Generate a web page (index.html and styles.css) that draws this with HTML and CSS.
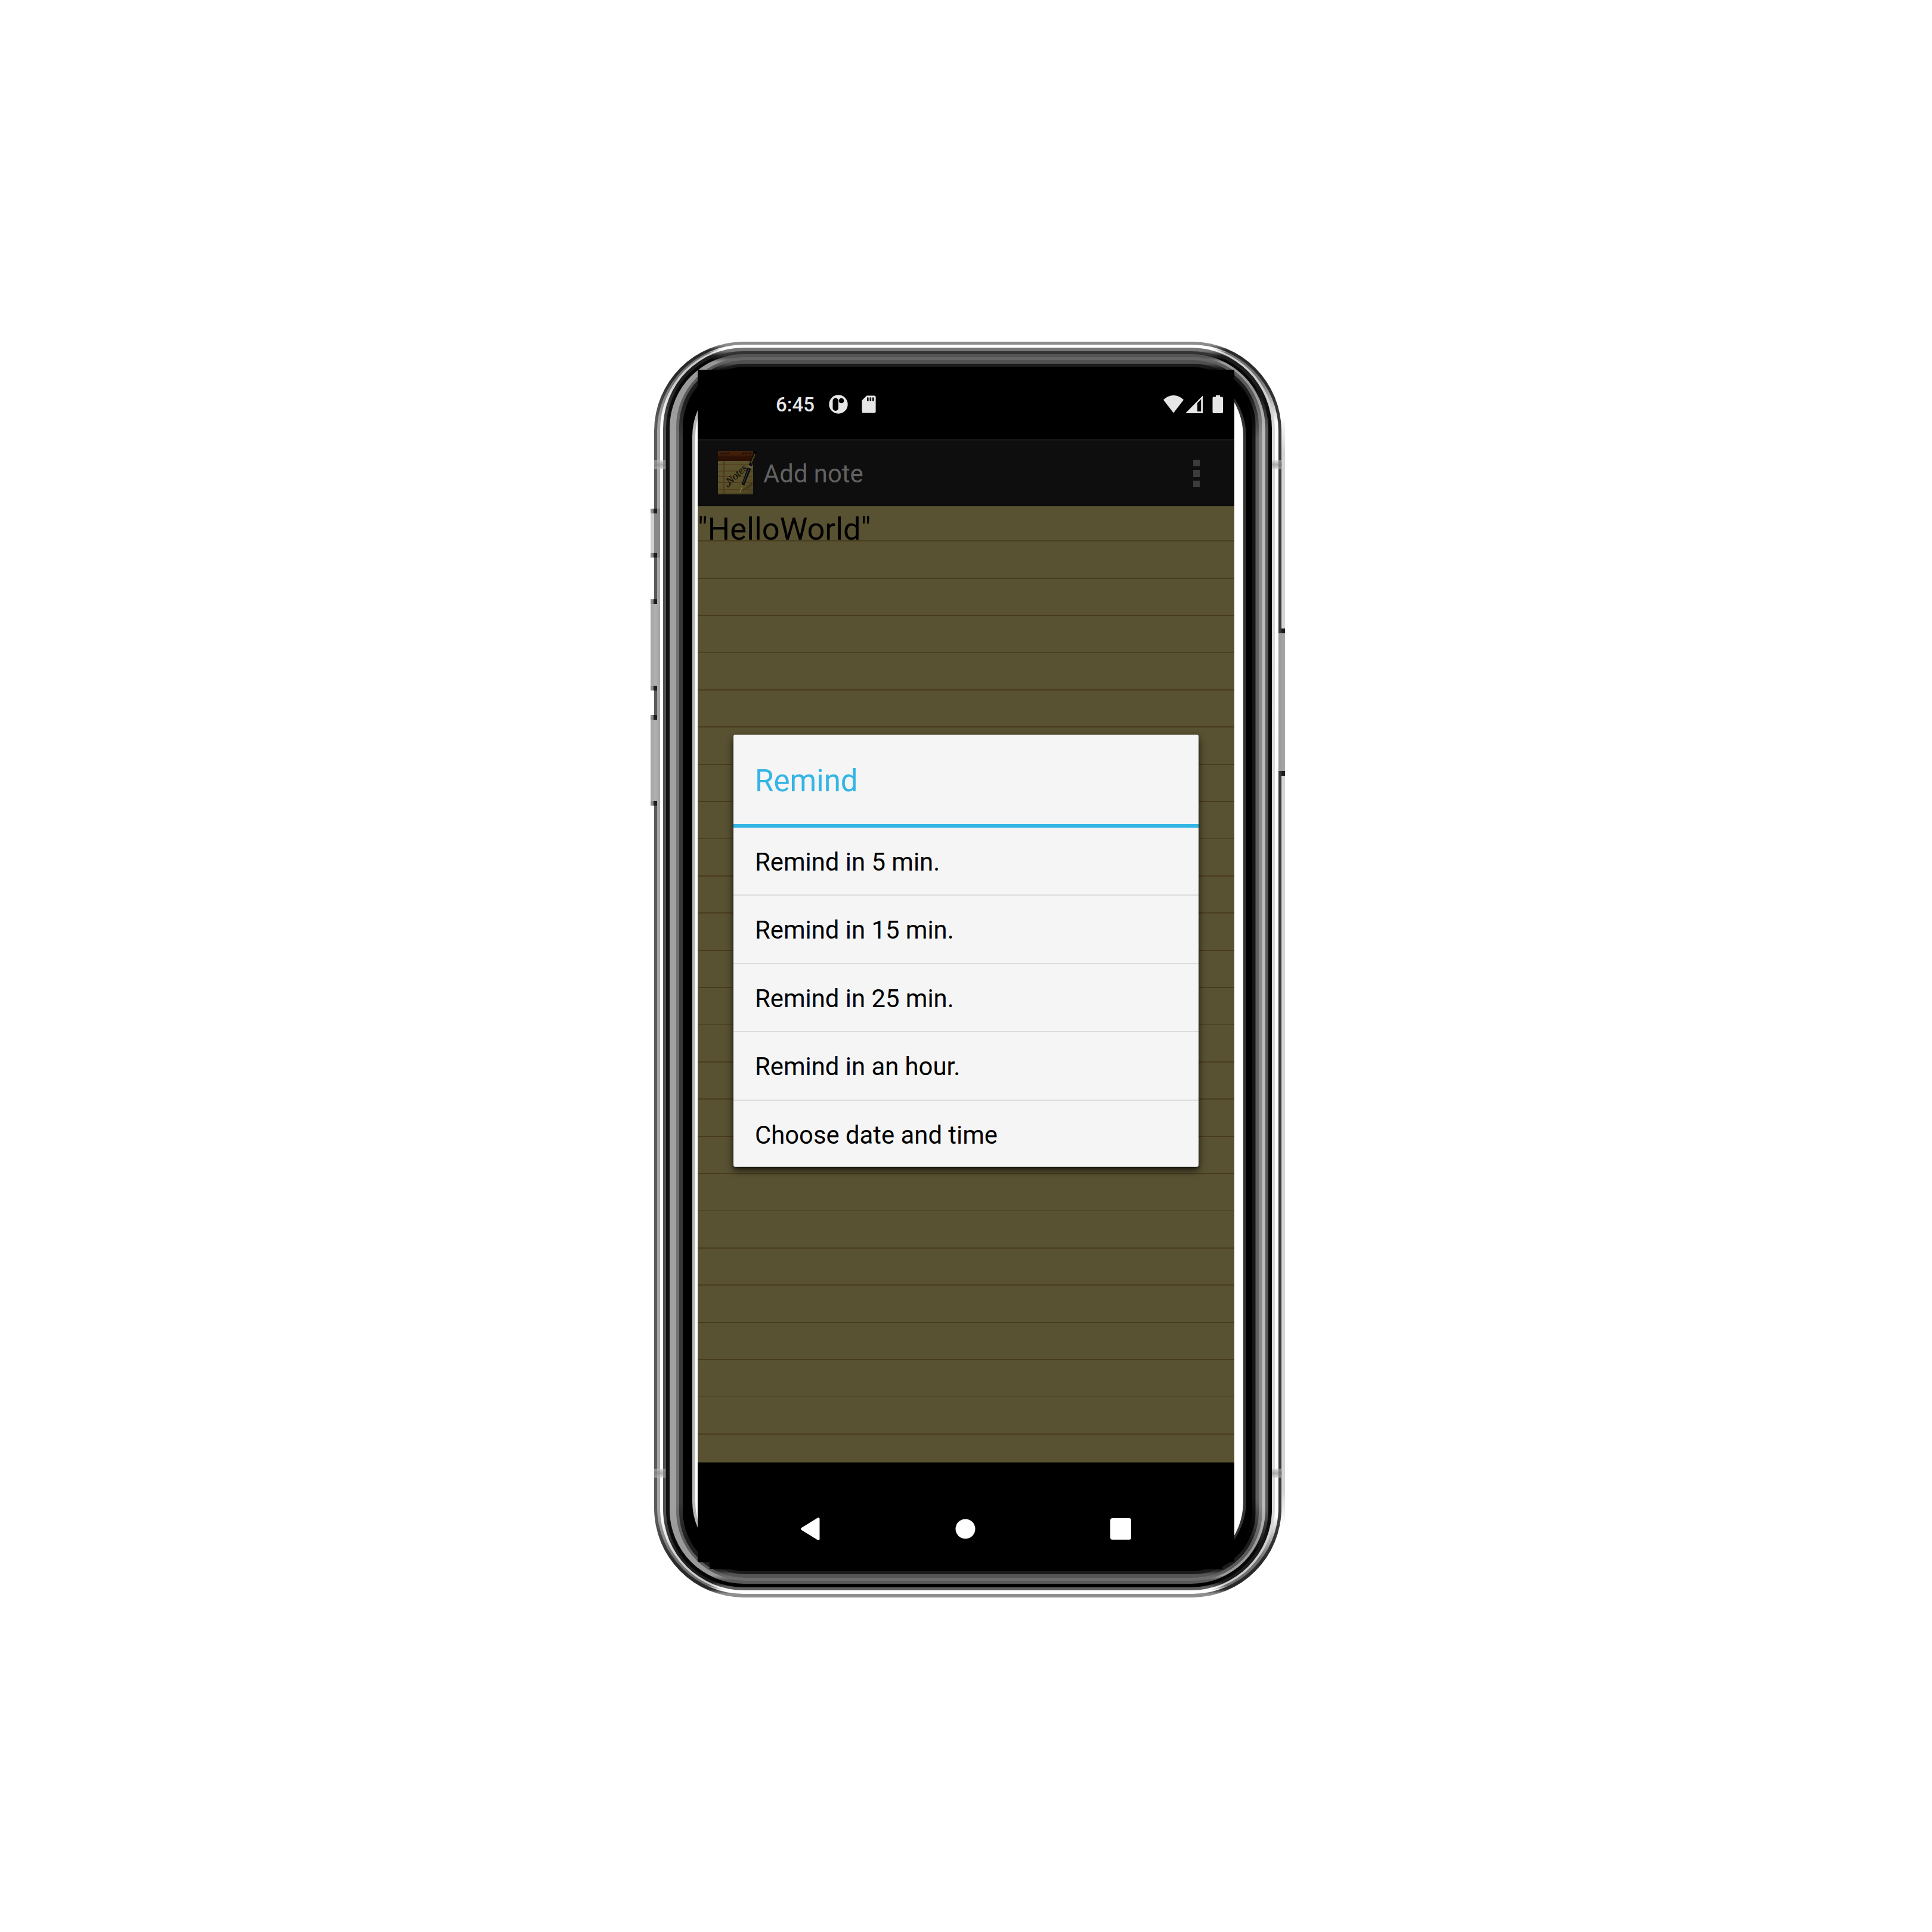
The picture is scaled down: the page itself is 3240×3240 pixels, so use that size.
FILE: index.html
```html
<!DOCTYPE html>
<html lang="en">
<head>
<meta charset="utf-8">
<title>Add note</title>
<link rel="stylesheet" href="styles.css">
</head>
<body>
<div class="phone">
  <i class="notch notch-l notch-top"></i><i class="notch notch-r notch-top"></i>
  <i class="notch notch-l notch-bottom"></i><i class="notch notch-r notch-bottom"></i>
  <i class="key key-mute"></i><i class="key key-up"></i><i class="key key-down"></i><i class="key key-power"></i>
  <div class="band b0"><div class="band b1"><div class="band b2"><div class="band b3"><div class="band b4"><div class="band b5"><div class="band b6"><div class="band b7"><div class="band b8"><div class="band b9">
    <div class="well">
      <main class="screen">
        <header class="status">
          <span class="time">6:45</span>
          <svg class="ic-app" width="32" height="32" viewBox="0 0 32 32"><circle cx="16" cy="16" r="15.7" fill="#e6e6e6"/><rect x="6.500" y="5.500" width="9.500" height="21.500" rx="4.700" fill="#000"/><circle cx="21" cy="10" r="4.300" fill="#000"/></svg>
          <svg class="ic-sd" width="24" height="30" viewBox="0 0 24 30"><path d="M8.500.5H21Q23.600.5 23.600 3V27Q23.600 29.500 21 29.500H3Q.5 29.500.5 27V8.500Z" fill="#e6e6e6"/><path d="M9 3.500h2.600v6H9zM13.500 3.500h2.600v6h-2.600zM18 3.500h2.600v6H18z" fill="#000"/></svg>
          <svg class="ic-signal" width="102" height="32" viewBox="0 0 102 32"><path d="M0 8.500Q7.500 1 17 1T34 8.500L17 30.500Z" fill="#e6e6e6"/><path d="M37 31L66 1.500V31Z" fill="#e6e6e6"/><path d="M57 14L63.200 7.500V28H57Z" fill="#000"/><path d="M88 1h7v2.500h3q2 0 2 2V29q0 2-2 2H84.500q-2 0-2-2V5.500q0-2 2-2H88Z" fill="#e6e6e6"/></svg>
        </header>
        <div class="appbar">
          <svg class="logo" width="68" height="76" viewBox="0 0 68 76">
            <defs>
              <linearGradient id="paper" x1="0" y1="0" x2="1" y2="1"><stop offset="0" stop-color="#5c542f"/><stop offset=".7" stop-color="#585029"/><stop offset="1" stop-color="#4a4221"/></linearGradient>
              <linearGradient id="leather" x1="0" y1="0" x2="0" y2="1"><stop offset="0" stop-color="#46210a"/><stop offset=".45" stop-color="#3e1b08"/><stop offset=".6" stop-color="#2b1003"/><stop offset="1" stop-color="#2b1003"/></linearGradient>
            </defs>
            <path d="M0 16H59V73H0Z" fill="url(#paper)"/>
            <path d="M0 0H59V17H0Z" fill="url(#leather)"/>
            <path d="M0 23.500H59M0 34H59M0 43.500H59M0 53.500H59M0 64.500H59M9 17V73M11 17V73" stroke="#4e3318" stroke-width="1" fill="none"/>
            <path d="M0 72.500H59" stroke="#39331b" stroke-width="1.500"/>
            <g fill="#17110f"><circle cx="5" cy="4" r="2"/><circle cx="10.500" cy="4" r="2"/><circle cx="16.500" cy="4" r="2"/><circle cx="42" cy="4" r="2"/><circle cx="48" cy="4" r="2"/><circle cx="54" cy="4" r="2"/></g>
            <g fill="#4a4443"><circle cx="4.500" cy="3.300" r=".8"/><circle cx="10" cy="3.300" r=".8"/><circle cx="16" cy="3.300" r=".8"/><circle cx="41.500" cy="3.300" r=".8"/><circle cx="47.500" cy="3.300" r=".8"/><circle cx="53.500" cy="3.300" r=".8"/></g>
            <path d="M38 69L56 53L59 57Q50 64 38 69Z" fill="#3a331b" opacity=".7"/>
            <text class="script" transform="translate(20 58) rotate(-43)">Notes</text>
            <path d="M15 58q2 5 4 1l2-6" stroke="#090805" stroke-width="1.300" fill="none"/>
            <path d="M60 2L65 3L57 26L51.500 24Z" fill="#101013"/><path d="M61 0l4.500 1.500-1.500 4-4-1.500z" fill="#050507"/>
            <path d="M62 6L55.500 21" stroke="#6b5514" stroke-width="1.500"/>
            <path d="M51 24.500L57 27L55.500 30L50 28Z" fill="#6a6243"/>
            <path d="M50 28L55.500 30L44 58.500L39.500 56Z" fill="#0d0d10"/><path d="M51.500 31L42.500 54" stroke="#3b3b40" stroke-width="1.200"/>
            <path d="M39.500 56.500L43.500 58.500L41.500 63L36.500 70Z" fill="#67551b"/><path d="M40 62L36.500 70" stroke="#8b865f" stroke-width="1"/>
          </svg>
          <span class="app-title">Add note</span>
          <span class="more"><i></i><i></i><i></i></span>
        </div>
        <section class="paper">
          <div class="note">"HelloWorld"</div>
          <div class="dialog">
            <h1>Remind</h1>
            <ul>
              <li>Remind in 5 min.</li>
              <li>Remind in 15 min.</li>
              <li>Remind in 25 min.</li>
              <li>Remind in an hour.</li>
              <li>Choose date and time</li>
            </ul>
          </div>
        </section>
        <nav class="nav">
          <svg width="34" height="40" viewBox="0 0 34 40"><path d="M3 20L30.500 3V37Z" fill="#fff" stroke="#fff" stroke-width="4" stroke-linejoin="round"/></svg>
          <svg width="34" height="34" viewBox="0 0 34 34"><circle cx="17" cy="17" r="16.500" fill="#fff"/></svg>
          <svg width="35" height="36" viewBox="0 0 35 36"><rect width="35" height="36" rx="3.500" fill="#fff"/></svg>
        </nav>
      </main>
    </div>
  </div></div></div></div></div></div></div></div></div></div>
</div>
</body>
</html>
```
FILE: styles.css
```css
* { box-sizing: border-box; }
html, body { margin: 0; background: #fff; }
body { width: 3240px; height: 3240px; overflow: hidden; padding: 572.500px 0 0 1096.500px; font-family: Roboto, "Liberation Sans", sans-serif; }
svg { display: block; flex: none; }

/* Metal frame: nested bands, each with its own side, corner and edge tones */
.phone { position: relative; width: 1052.500px; height: 2106px; }
.phone::after { content: ""; position: absolute; left: 1052.500px; top: 125px; width: 6px; height: 1860px; background: linear-gradient(#fff, #d5d5d5 60px, #d5d5d5 1800px, #fff); }
.band {
  height: 100%;
  border-radius: var(--r);
  background:
    linear-gradient(var(--t) 6px, var(--c) 14px, var(--c) 60px, var(--l) 130px, var(--l) calc(100% - 130px), var(--c) calc(100% - 60px), var(--c) calc(100% - 14px), var(--b) calc(100% - 6px)) 0 0 / 50.1% 100% no-repeat,
    linear-gradient(var(--t) 6px, var(--c) 14px, var(--c) 60px, var(--rt) 130px, var(--rt) calc(100% - 130px), var(--c) calc(100% - 60px), var(--c) calc(100% - 14px), var(--b) calc(100% - 6px)) 100% 0 / 50% 100% no-repeat;
}
.b0 { --r: 150px; --l: #5a5a5a; --rt: #3c3c3c; --c: #2a2a2a; --t: #8c8c8c; --b: #8f8f8f; padding: 5px 5.400px 5.800px 5.200px; }
.b1 { --r: 145px; --l: #a5a5a5; --rt: #fdfdfd; --c: #707070; --t: #fff; --b: #fff; padding: 2.500px 5.300px 2.700px 5.300px; }
.b2 { --r: 141px; --l: #fff; --rt: #d8d8d8; --c: #ccc; --t: #fff; --b: #fff; padding: 3.300px 5.300px 2.700px 5px; }
.b3 { --r: 136px; --l: #505050; --rt: #050505; --c: #1c1c1c; --t: #757575; --b: #5f5f5f; padding: 5.300px 5.700px 5.300px 5.500px; }
.b4 { --r: 130px; --l: #111; --rt: #585858; --c: #050505; --t: #333; --b: #000; padding: 5.100px 5.300px 5.700px 5.800px; }
.b5 { --r: 124px; --l: #a0a0a0; --rt: #bbb; --c: #999; --t: #555; --b: #5a5a5a; padding: 5.300px 5.400px 5.300px 10.700px; }
.b6 { --r: 117px; --l: #707070; --rt: #868686; --c: #5a5a5a; --t: #666; --b: #6c6c6c; padding: 5.300px 5.600px 5.300px 5.500px; }
.b7 { --r: 111px; --l: #383838; --rt: #606060; --c: #1c1c1c; --t: #505050; --b: #555; padding: 5.700px 5.300px 5.400px 5.200px; }
.b8 { --r: 106px; --l: #000; --rt: #151515; --c: #000; --t: #1a1a1a; --b: #1c1c1c; padding: 5.300px 5.400px 5.300px 2px; }
.b9 { --r: 104px; --l: #000; --rt: #000; --c: #000; --t: #000; --b: #000; padding: 4.700px 10.600px 5px 14.300px; }
.well { height: 100%; background: #fff; border-left: 5px solid #b8b8b8; border-right: 5px solid #333; border-radius: 112px; padding: 0 14.500px 0 4.100px; }

.notch { position: absolute; width: 19px; height: 15px; background: linear-gradient(#c4c6c888, #8f9194bb, #c4c6c888); z-index: 1; }
.notch-l { left: 0; }
.notch-r { right: -1px; width: 17px; }
.notch-top { top: 199.500px; }
.notch-bottom { top: 1890.500px; }
.key { position: absolute; left: -6px; width: 16.500px; background: linear-gradient(90deg, #a6a6a6, #b0b0b0 55%, #a2a2a2); z-index: 1; }
.key::before, .key::after { content: ""; position: absolute; left: 0; width: 11px; height: 8px; background: linear-gradient(90deg, #8a8a8a 50%, #1c1c1c 50%); }
.key::before { top: 0; }
.key::after { bottom: 0; }
.key-mute { top: 280.500px; height: 82px; background: linear-gradient(90deg, #d0d0d0 35%, #888 36%); }
.key-up { top: 432px; height: 153px; }
.key-down { top: 626px; height: 152px; }
.key-power { left: 1047px; top: 481px; width: 11.500px; height: 247px; background: linear-gradient(90deg, #999, #a8a8a8); }
.key-power::before, .key-power::after { background: linear-gradient(90deg, #383838 50%, #1c1c1c 50%); }

.screen { width: 900px; height: 2000px; display: flex; flex-direction: column; background: #000; box-shadow: 0 31px 0 -20px #000; position: relative; }
.status { height: 116px; flex: none; display: flex; align-items: center; padding: 1px 17px 0 131px; }
.time { font-size: 33px; font-weight: 500; line-height: 40px; color: #e6e6e6; width: 89px; padding-top: 2px; }
.ic-app { margin-right: 23px; }
.ic-signal { margin-left: auto; }

.appbar { height: 113px; flex: none; display: flex; align-items: center; padding: 0 58px 0 33.500px; border-top: 3px solid #151515; background: linear-gradient(#0e0e0e 95%, #090909); }
.logo { margin-right: 8.500px; }
.script { font: italic 18px "Liberation Serif", serif; fill: #090805; }
.app-title { font-size: 41.800px; line-height: 50px; color: #626262; padding-top: 2px; }
.more { margin-left: auto; display: grid; gap: 6px; }
.more i { width: 11.500px; height: 11.500px; background: #3c3c3c; }

.paper { flex: none; height: 1604.500px; padding: 383px 60px 0; background: repeating-linear-gradient(transparent 0 57.500px, #4a3c1e 57.500px 59.300px, transparent 59.300px 62.400px) #585232; position: relative; border-bottom: 1px solid #2c2918; }
.note { position: absolute; left: 0; top: 0; font-size: 52.500px; line-height: 77px; color: #000; }
.dialog { height: 725px; background: #f5f5f5; border-radius: 4px; box-shadow: 0 6px 14px rgba(0,0,0,.65), 0 2px 5px rgba(0,0,0,.4), inset 0 1px #fff, inset 0 -1px #ccc; }
.dialog h1 { margin: 0; height: 156px; padding: 3px 36px 0; border-bottom: 6px solid #33b5e5; font-size: 51px; font-weight: 400; line-height: 150px; color: #33b5e5; }
.dialog ul { margin: 0; padding: 0; list-style: none; }
.dialog li { height: 114.500px; padding: 2px 36px 0; border-bottom: 2px solid #dcdcdc; font-size: 41.800px; line-height: 112px; color: #000; }
.dialog li:last-child { height: 110px; border: 0; }

.nav { flex: 1; display: flex; align-items: center; justify-content: space-between; padding: 54px 173.500px 0 171.500px; }
```
